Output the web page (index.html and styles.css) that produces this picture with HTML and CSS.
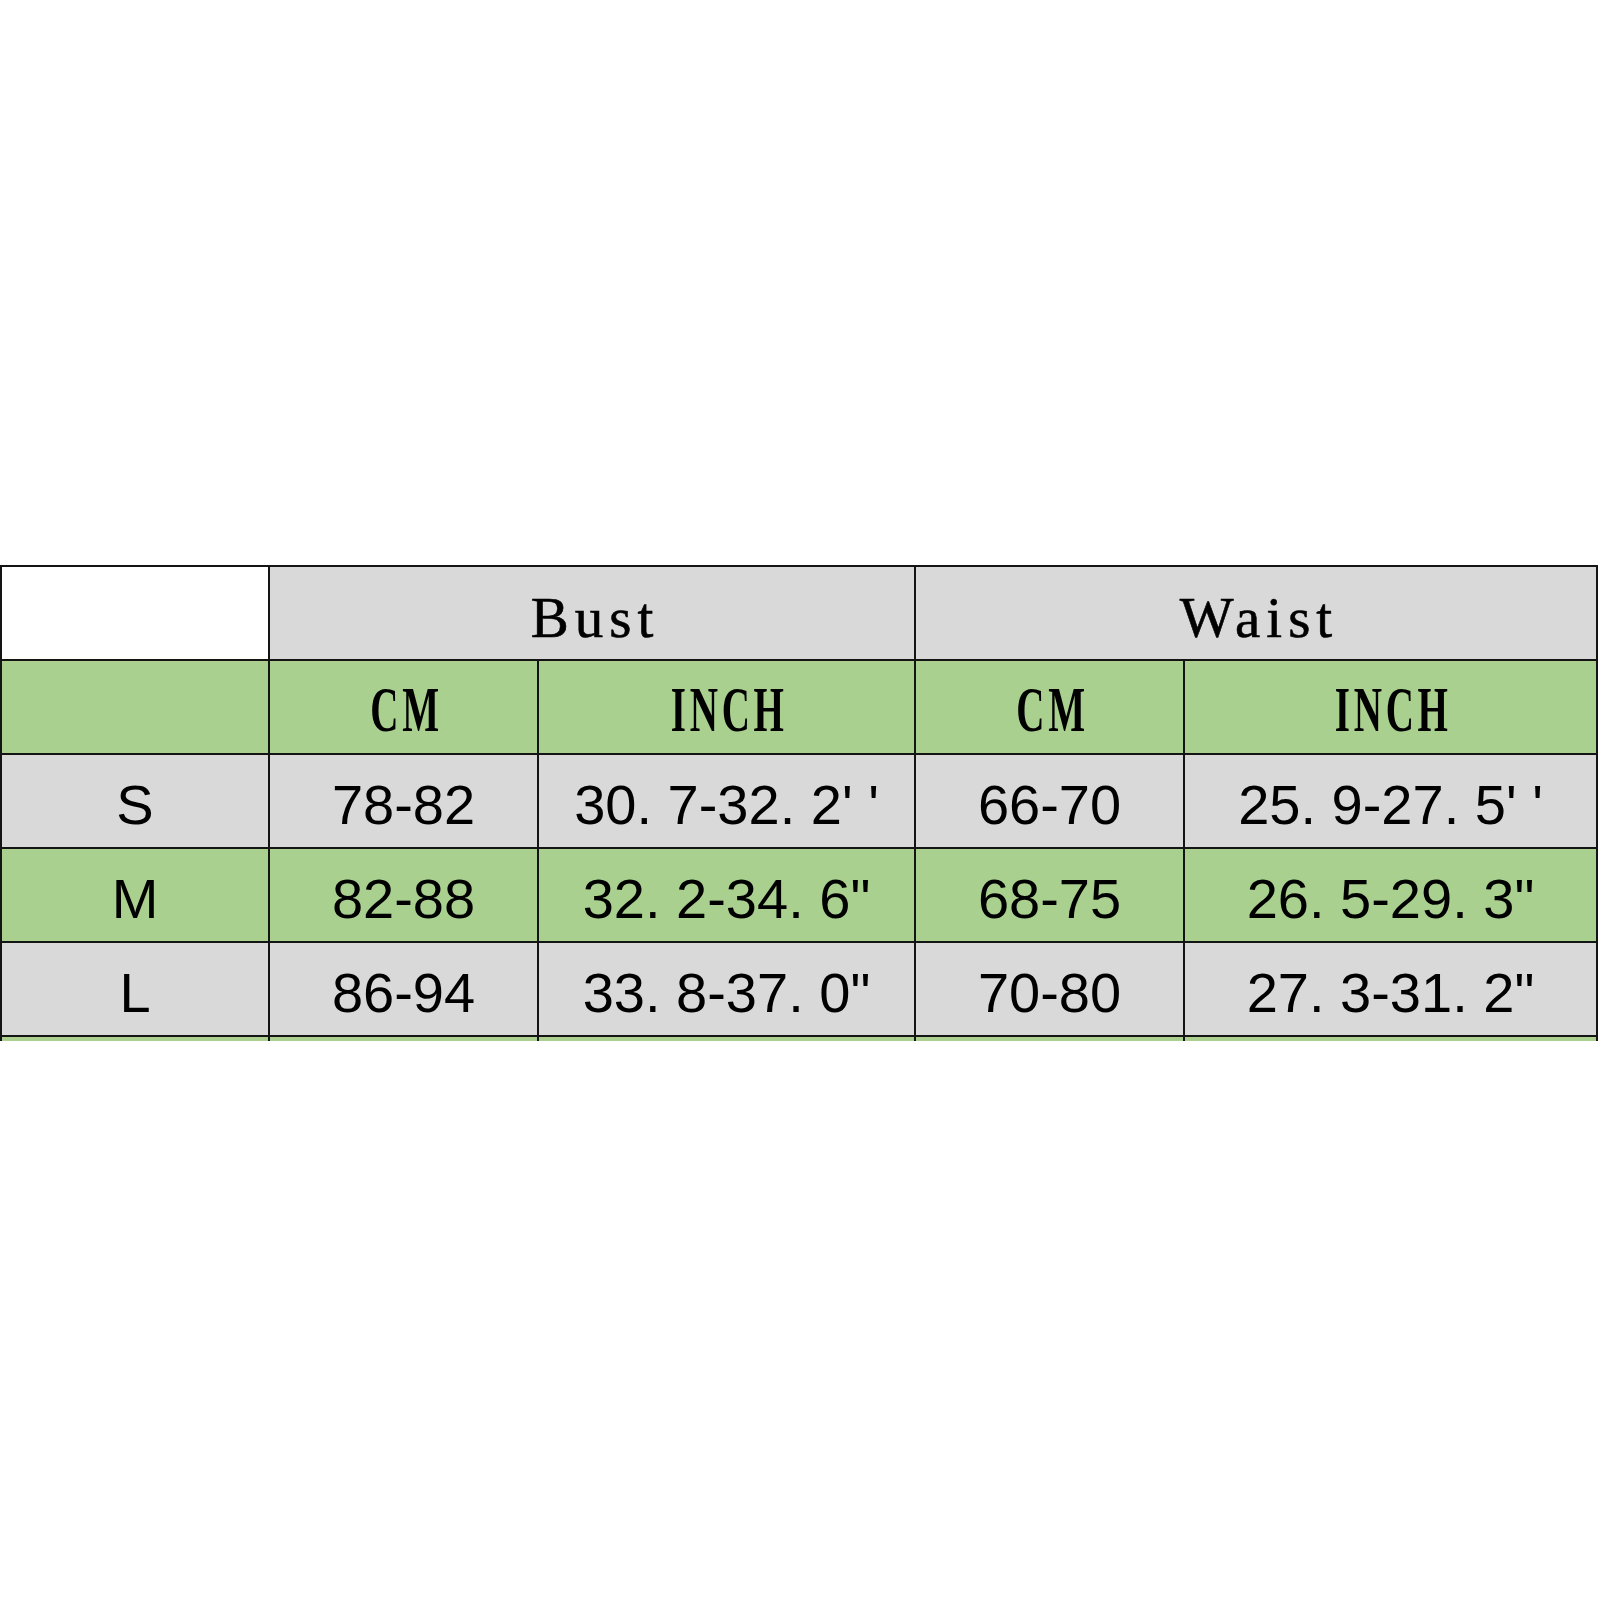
FILE: index.html
```html
<!DOCTYPE html>
<html>
<head>
<meta charset="utf-8">
<link rel="stylesheet" href="styles.css">
</head>
<body>
<div class="page">
  <div class="clip">
    <div class="sheet">
      <div class="cell blank"></div>
      <div class="cell gray span2 head"><span>Bust</span></div>
      <div class="cell gray span2 head"><span>Waist</span></div>

      <div class="cell green"></div>
      <div class="cell green unit"><span>CM</span></div>
      <div class="cell green unit"><span>INCH</span></div>
      <div class="cell green unit"><span>CM</span></div>
      <div class="cell green unit"><span>INCH</span></div>

      <div class="cell gray val">S</div>
      <div class="cell gray val">78-82</div>
      <div class="cell gray val">30. 7-32. 2' '</div>
      <div class="cell gray val">66-70</div>
      <div class="cell gray val">25. 9-27. 5' '</div>

      <div class="cell green val">M</div>
      <div class="cell green val">82-88</div>
      <div class="cell green val">32. 2-34. 6"</div>
      <div class="cell green val">68-75</div>
      <div class="cell green val">26. 5-29. 3"</div>

      <div class="cell gray val">L</div>
      <div class="cell gray val">86-94</div>
      <div class="cell gray val">33. 8-37. 0"</div>
      <div class="cell gray val">70-80</div>
      <div class="cell gray val">27. 3-31. 2"</div>

      <div class="cell green"></div>
      <div class="cell green"></div>
      <div class="cell green"></div>
      <div class="cell green"></div>
      <div class="cell green"></div>
    </div>
  </div>
</div>
</body>
</html>
```

FILE: styles.css
```css
html, body {
  margin: 0;
  padding: 0;
  background: #ffffff;
}

.page {
  width: 1600px;
  height: 1600px;
  padding-top: 565px;
  box-sizing: border-box;
}

.clip {
  width: 1600px;
  height: 476px;
  overflow: hidden;
}

.sheet {
  display: grid;
  grid-template-columns: 266px 267px 375px 267px 411px;
  grid-auto-rows: 92px;
  gap: 2px;
  padding: 2px;
  background: #141414;
  width: max-content;
}

.cell {
  display: flex;
  align-items: center;
  justify-content: center;
  color: #000;
}

.blank { background: #ffffff; }
.gray { background: #d9d9d9; }
.green { background: #a9d08e; }

.span2 { grid-column: span 2; }

.head span {
  font-family: "Liberation Serif", serif;
  font-size: 57px;
  letter-spacing: 6px;
  margin-right: -6px;
  padding-top: 8px;
  -webkit-text-stroke: 0.6px #000;
}

.unit span {
  display: inline-block;
  font-family: "Liberation Serif", serif;
  font-weight: bold;
  font-size: 63px;
  letter-spacing: 6px;
  margin-right: -6px;
  transform: scaleX(0.62);
  padding-top: 6px;
}

.val {
  font-family: "Liberation Sans", sans-serif;
  font-size: 56px;
  padding-top: 6px;
  white-space: pre;
}
```
